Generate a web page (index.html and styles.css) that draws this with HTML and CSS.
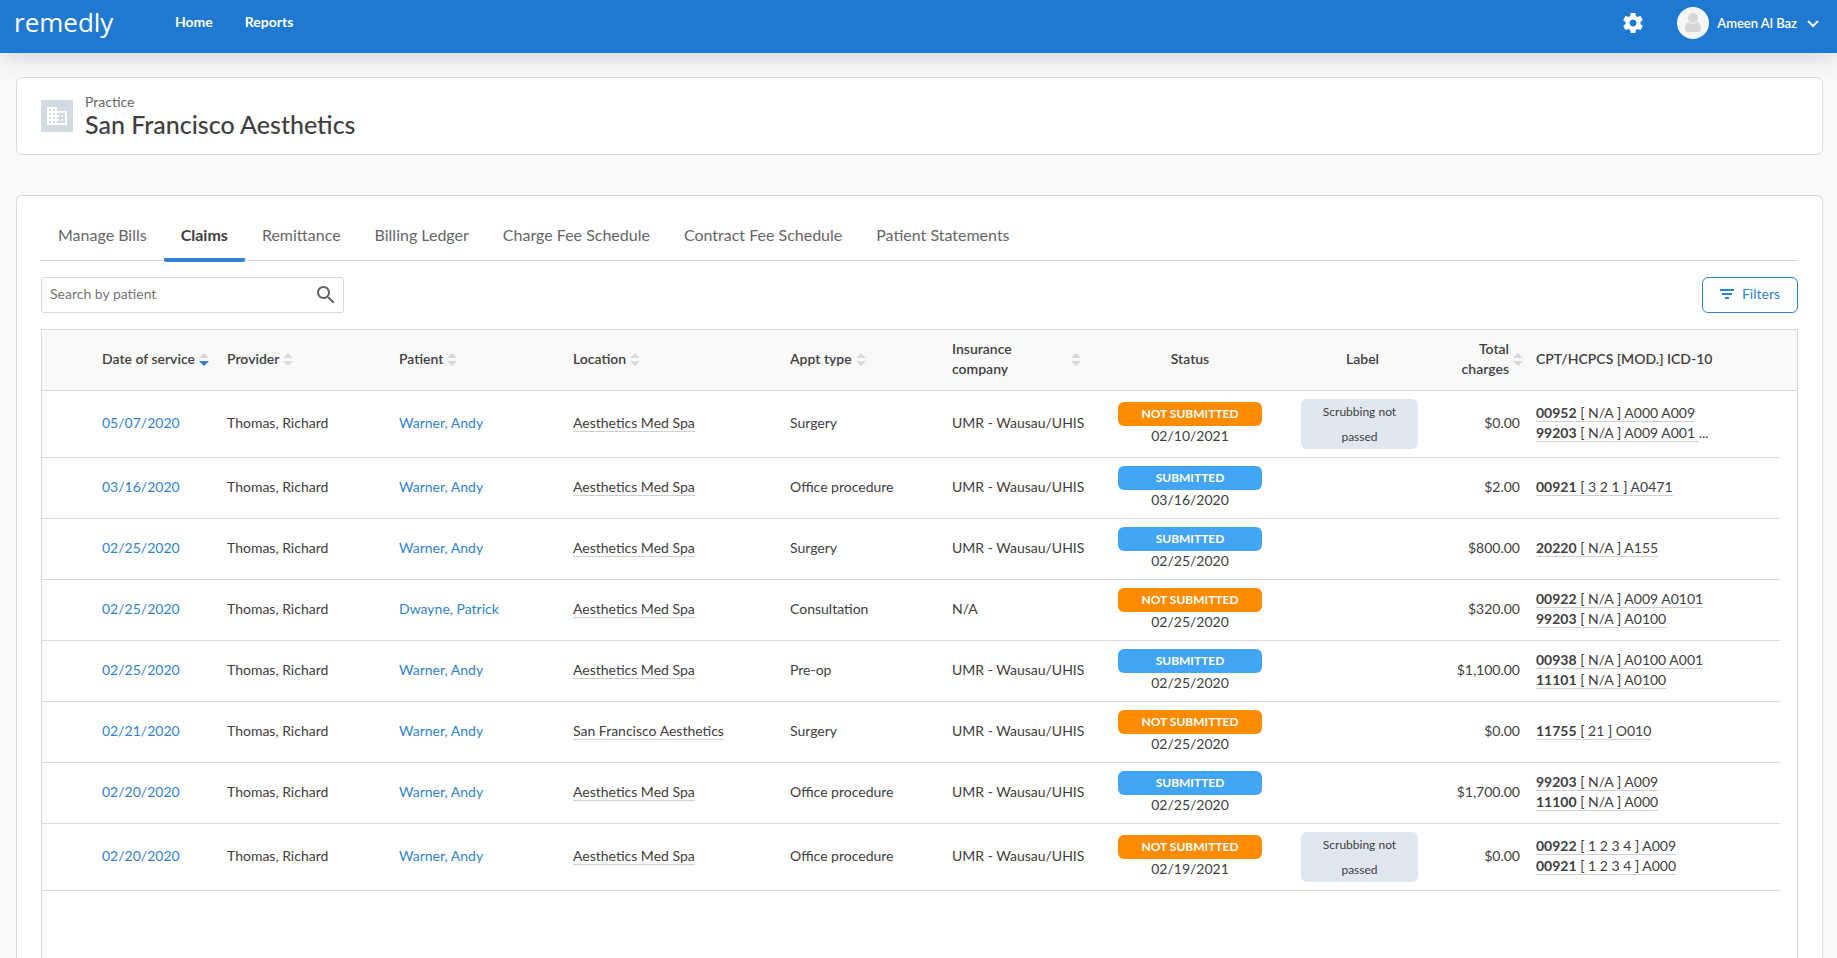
FILE: index.html
```html
<!DOCTYPE html>
<html lang="en">
<head>
    <meta charset="utf-8">
    <title>Remedly - Claims</title>
    <link rel="stylesheet" href="styles.css">
</head>
<body>
    <svg class="sprite" aria-hidden="true">
        <symbol id="sort" viewBox="0 0 10 13">
            <path class="sort-up" d="M5 0l5 5H0z"/>
            <path class="sort-down" d="M5 13l5-5H0z"/>
        </symbol>
    </svg>

    <header class="top-bar">
        <a class="logo" href="#">remedly</a>
        <nav class="main-nav">
            <a href="#">Home</a>
            <a href="#">Reports</a>
        </nav>
        <button class="icon-button" aria-label="Settings">
            <svg width="24" height="24" viewBox="0 0 24 24" fill="#fff"><path d="M19.43 12.98c.04-.32.07-.64.07-.98s-.03-.66-.07-.98l2.11-1.65c.19-.15.24-.42.12-.64l-2-3.46c-.12-.22-.39-.3-.61-.22l-2.49 1c-.52-.4-1.08-.73-1.69-.98l-.38-2.65C14.46 2.18 14.25 2 14 2h-4c-.25 0-.46.18-.49.42l-.38 2.65c-.61.25-1.17.59-1.69.98l-2.49-1c-.23-.09-.49 0-.61.22l-2 3.46c-.13.22-.07.49.12.64l2.11 1.65c-.04.32-.07.65-.07.98s.03.66.07.98l-2.11 1.65c-.19.15-.24.42-.12.64l2 3.46c.12.22.39.3.61.22l2.49-1c.52.4 1.08.73 1.69.98l.38 2.65c.03.24.24.42.49.42h4c.25 0 .46-.18.49-.42l.38-2.65c.61-.25 1.17-.59 1.69-.98l2.49 1c.23.09.49 0 .61-.22l2-3.46c.12-.22.07-.49-.12-.64l-2.11-1.65zM12 15.5c-1.93 0-3.5-1.57-3.5-3.5s1.57-3.5 3.5-3.5 3.5 1.57 3.5 3.5-1.57 3.5-3.5 3.5z"/></svg>
        </button>
        <button class="user-menu">
            <svg width="32" height="32" viewBox="0 0 32 32"><circle cx="16" cy="16" r="16" fill="#f5f7f6"/><circle cx="16" cy="11" r="5" fill="#d6d6d6"/><path d="M8 21c0-4 2-6 4-6 1 1 2 2 4 2s3-1 4-2c2 0 4 2 4 6v1c0 2-1 3-3 3H11c-2 0-3-1-3-3z" fill="#d6d6d6"/></svg>
            <span>Ameen Al Baz</span>
            <svg class="chevron" width="12" height="8" viewBox="0 0 12 8"><path d="M1 1l5 5 5-5" fill="none" stroke="#fff" stroke-width="2"/></svg>
        </button>
    </header>

    <main class="page">
        <section class="card practice">
            <svg width="32" height="32" viewBox="0 0 32 32"><path fill="#d2dae4" d="M0 0h32v32H0z"/><path fill="#fff" transform="translate(4 4)" d="M12 7V3H2v18h20V7H12zM6 19H4v-2h2v2zm0-4H4v-2h2v2zm0-4H4V9h2v2zm0-4H4V5h2v2zm4 12H8v-2h2v2zm0-4H8v-2h2v2zm0-4H8V9h2v2zm0-4H8V5h2v2zm10 12h-8v-2h2v-2h-2v-2h2v-2h-2V9h8v10zm-2-8h-2v2h2v-2zm0 4h-2v2h2v-2z"/></svg>
            <div>
                <p class="practice-label">Practice</p>
                <h1>San Francisco Aesthetics</h1>
            </div>
        </section>

        <section class="card claims">
            <nav class="tabs">
                <a href="#">Manage Bills</a>
                <a href="#" class="active">Claims</a>
                <a href="#">Remittance</a>
                <a href="#">Billing Ledger</a>
                <a href="#">Charge Fee Schedule</a>
                <a href="#">Contract Fee Schedule</a>
                <a href="#">Patient Statements</a>
            </nav>

            <div class="toolbar">
                <div class="search">
                    <input type="text" placeholder="Search by patient" aria-label="Search by patient">
                    <button aria-label="Search">
                        <svg width="24" height="24" viewBox="0 0 24 24" fill="#666"><path d="M15.5 14h-.79l-.28-.27C15.41 12.59 16 11.11 16 9.5 16 5.91 13.09 3 9.5 3S3 5.91 3 9.5 5.91 16 9.5 16c1.61 0 3.09-.59 4.23-1.57l.27.28v.79l5 4.99L20.49 19l-4.99-5zm-6 0C7.01 14 5 11.99 5 9.5S7.01 5 9.5 5 14 7.01 14 9.5 11.99 14 9.5 14z"/></svg>
                    </button>
                </div>
                <button class="filters">
                    <svg width="14" height="10" viewBox="0 0 14 10" fill="#3182ce"><path d="M0 0h14v2H0zM2 4h10v2H2zM5 8h4v2H5z"/></svg>
                    Filters
                </button>
            </div>

            <div class="table-container">
                <table>
                    <colgroup>
                        <col class="col-expand">
                        <col class="col-date">
                        <col class="col-provider">
                        <col class="col-patient">
                        <col class="col-location">
                        <col class="col-appt">
                        <col class="col-insurance">
                        <col class="col-status">
                        <col class="col-label">
                        <col class="col-total">
                        <col>
                        <col class="col-end">
                    </colgroup>
                    <thead>
                        <tr>
                            <th></th>
                            <th><div class="head">Date of service <svg class="sort desc"><use href="#sort"/></svg></div></th>
                            <th><div class="head">Provider <svg class="sort"><use href="#sort"/></svg></div></th>
                            <th><div class="head">Patient <svg class="sort"><use href="#sort"/></svg></div></th>
                            <th><div class="head">Location <svg class="sort"><use href="#sort"/></svg></div></th>
                            <th><div class="head">Appt type <svg class="sort"><use href="#sort"/></svg></div></th>
                            <th><div class="head spread">Insurance<br>company <svg class="sort"><use href="#sort"/></svg></div></th>
                            <th class="center">Status</th>
                            <th class="center">Label</th>
                            <th class="total"><div class="head">Total<br>charges <svg class="sort"><use href="#sort"/></svg></div></th>
                            <th colspan="2">CPT/HCPCS [MOD.] ICD-10</th>
                        </tr>
                    </thead>
                    <tbody>
                        <tr>
                            <td></td>
                            <td><a href="#">05/07/2020</a></td>
                            <td>Thomas, Richard</td>
                            <td><a href="#">Warner, Andy</a></td>
                            <td><span class="hint">Aesthetics Med Spa</span></td>
                            <td>Surgery</td>
                            <td>UMR - Wausau/UHIS</td>
                            <td class="center"><span class="status not-submitted">NOT SUBMITTED</span>02/10/2021</td>
                            <td class="label"><span>Scrubbing not passed</span></td>
                            <td class="total">$0.00</td>
                            <td><span class="hint"><b>00952</b> [ N/A ] A000 A009</span><br><span class="hint"><b>99203</b> [ N/A ] A009 A001 </span>...</td>
                            <td class="end"></td>
                        </tr>
                        <tr>
                            <td></td>
                            <td><a href="#">03/16/2020</a></td>
                            <td>Thomas, Richard</td>
                            <td><a href="#">Warner, Andy</a></td>
                            <td><span class="hint">Aesthetics Med Spa</span></td>
                            <td>Office procedure</td>
                            <td>UMR - Wausau/UHIS</td>
                            <td class="center"><span class="status submitted">SUBMITTED</span>03/16/2020</td>
                            <td></td>
                            <td class="total">$2.00</td>
                            <td><span class="hint"><b>00921</b> [ 3 2 1 ] A0471</span></td>
                            <td class="end"></td>
                        </tr>
                        <tr>
                            <td></td>
                            <td><a href="#">02/25/2020</a></td>
                            <td>Thomas, Richard</td>
                            <td><a href="#">Warner, Andy</a></td>
                            <td><span class="hint">Aesthetics Med Spa</span></td>
                            <td>Surgery</td>
                            <td>UMR - Wausau/UHIS</td>
                            <td class="center"><span class="status submitted">SUBMITTED</span>02/25/2020</td>
                            <td></td>
                            <td class="total">$800.00</td>
                            <td><span class="hint"><b>20220</b> [ N/A ] A155</span></td>
                            <td class="end"></td>
                        </tr>
                        <tr>
                            <td></td>
                            <td><a href="#">02/25/2020</a></td>
                            <td>Thomas, Richard</td>
                            <td><a href="#">Dwayne, Patrick</a></td>
                            <td><span class="hint">Aesthetics Med Spa</span></td>
                            <td>Consultation</td>
                            <td>N/A</td>
                            <td class="center"><span class="status not-submitted">NOT SUBMITTED</span>02/25/2020</td>
                            <td></td>
                            <td class="total">$320.00</td>
                            <td><span class="hint"><b>00922</b> [ N/A ] A009 A0101</span><br><span class="hint"><b>99203</b> [ N/A ] A0100</span></td>
                            <td class="end"></td>
                        </tr>
                        <tr>
                            <td></td>
                            <td><a href="#">02/25/2020</a></td>
                            <td>Thomas, Richard</td>
                            <td><a href="#">Warner, Andy</a></td>
                            <td><span class="hint">Aesthetics Med Spa</span></td>
                            <td>Pre-op</td>
                            <td>UMR - Wausau/UHIS</td>
                            <td class="center"><span class="status submitted">SUBMITTED</span>02/25/2020</td>
                            <td></td>
                            <td class="total">$1,100.00</td>
                            <td><span class="hint"><b>00938</b> [ N/A ] A0100 A001</span><br><span class="hint"><b>11101</b> [ N/A ] A0100</span></td>
                            <td class="end"></td>
                        </tr>
                        <tr>
                            <td></td>
                            <td><a href="#">02/21/2020</a></td>
                            <td>Thomas, Richard</td>
                            <td><a href="#">Warner, Andy</a></td>
                            <td><span class="hint">San Francisco Aesthetics</span></td>
                            <td>Surgery</td>
                            <td>UMR - Wausau/UHIS</td>
                            <td class="center"><span class="status not-submitted">NOT SUBMITTED</span>02/25/2020</td>
                            <td></td>
                            <td class="total">$0.00</td>
                            <td><span class="hint"><b>11755</b> [ 21 ] O010</span></td>
                            <td class="end"></td>
                        </tr>
                        <tr>
                            <td></td>
                            <td><a href="#">02/20/2020</a></td>
                            <td>Thomas, Richard</td>
                            <td><a href="#">Warner, Andy</a></td>
                            <td><span class="hint">Aesthetics Med Spa</span></td>
                            <td>Office procedure</td>
                            <td>UMR - Wausau/UHIS</td>
                            <td class="center"><span class="status submitted">SUBMITTED</span>02/25/2020</td>
                            <td></td>
                            <td class="total">$1,700.00</td>
                            <td><span class="hint"><b>99203</b> [ N/A ] A009</span><br><span class="hint"><b>11100</b> [ N/A ] A000</span></td>
                            <td class="end"></td>
                        </tr>
                        <tr>
                            <td></td>
                            <td><a href="#">02/20/2020</a></td>
                            <td>Thomas, Richard</td>
                            <td><a href="#">Warner, Andy</a></td>
                            <td><span class="hint">Aesthetics Med Spa</span></td>
                            <td>Office procedure</td>
                            <td>UMR - Wausau/UHIS</td>
                            <td class="center"><span class="status not-submitted">NOT SUBMITTED</span>02/19/2021</td>
                            <td class="label"><span>Scrubbing not passed</span></td>
                            <td class="total">$0.00</td>
                            <td><span class="hint"><b>00922</b> [ 1 2 3 4 ] A009</span><br><span class="hint"><b>00921</b> [ 1 2 3 4 ] A000</span></td>
                            <td class="end"></td>
                        </tr>
                    </tbody>
                </table>
            </div>
        </section>
    </main>
</body>
</html>
```
FILE: styles.css
```css
* {
    box-sizing: border-box;
}
body {
    margin: 0;
    height: 100vh;
    display: flex;
    flex-direction: column;
    overflow: hidden;
    background-color: #f9f9f9;
    color: #404040;
    font-family: Lato, sans-serif;
    font-size: 14px;
    line-height: 20px;
}
a {
    color: #3182ce;
    text-decoration: none;
}
button {
    font: inherit;
    background: none;
    border: none;
    padding: 0;
    cursor: pointer;
}
svg {
    display: block;
    flex: none;
}
.sprite {
    position: absolute;
    width: 0;
    height: 0;
}

/* top bar */
.top-bar {
    display: flex;
    align-items: center;
    flex: none;
    height: 53px;
    padding: 0 18px 8px 14px;
    background-color: #2079d1;
    box-shadow: 0 4px 24px rgba(45, 55, 90, 0.2);
}
.top-bar a {
    color: white;
}
.logo {
    width: 161px;
    padding-bottom: 2px;
    font-family: "Open Sans", sans-serif;
    font-size: 26px;
    line-height: 32px;
}
.main-nav {
    display: flex;
    gap: 32px;
    flex: 1;
    padding-bottom: 2px;
    font-weight: bold;
}
.icon-button {
    margin-right: 32px;
}
.user-menu {
    display: flex;
    align-items: center;
    gap: 8px;
    color: white;
    font-size: 13px;
    font-weight: 600;
}
.chevron {
    margin: 3px 0 0 2px;
}

/* cards */
.page {
    display: flex;
    flex-direction: column;
    flex: 1;
    gap: 40px;
    min-height: 0;
    padding: 24px 14px 0 16px;
}
.card {
    background-color: white;
    border: 1px solid #d9d9d9;
    border-radius: 6px;
}
.practice {
    display: flex;
    align-items: center;
    gap: 12px;
    height: 78px;
    padding: 0 24px;
}
.practice-label {
    margin: 0;
    color: #666;
}
.practice h1 {
    margin: 0;
    padding-bottom: 4px;
    font-size: 25px;
    font-weight: 500;
    line-height: 25px;
}
.claims {
    display: flex;
    flex-direction: column;
    flex: 1;
    min-height: 0;
    padding: 16px 24px 0;
    border-bottom: none;
    border-radius: 6px 6px 0 0;
}

/* tabs */
.tabs {
    display: flex;
    flex: none;
    height: 49px;
    border-bottom: 1px solid #d9d9d9;
    font-size: 16px;
    line-height: 46px;
}
.tabs a {
    height: 50px;
    padding: 0 17px;
    color: #666;
}
.tabs .active {
    color: #404040;
    font-weight: bold;
    background: linear-gradient(#3182ce, #3182ce) bottom / 100% 4px no-repeat;
    border-radius: 2px;
}

/* search and filters */
.toolbar {
    display: flex;
    justify-content: space-between;
    flex: none;
    padding: 16px 0;
}
.search {
    display: flex;
    align-items: center;
    width: 303px;
    height: 36px;
    padding: 0 5px 0 8px;
    border: 1px solid #d9d9d9;
    border-radius: 3px;
}
.search input {
    flex: 1;
    min-width: 0;
    padding: 0 0 2px;
    border: none;
    outline: none;
    font: inherit;
}
.search input::placeholder {
    color: #757575;
}
.filters {
    display: flex;
    align-items: center;
    justify-content: center;
    gap: 8px;
    width: 96px;
    height: 36px;
    padding-bottom: 2px;
    border: 1px solid #3182ce;
    border-radius: 6px;
    color: #3182ce;
}

/* claims table */
.table-container {
    flex: 1;
    min-height: 0;
    border: 1px solid #d9d9d9;
    border-bottom: none;
}
table {
    width: 100%;
    table-layout: fixed;
    border-collapse: separate;
    border-spacing: 0;
}
.col-expand { width: 52px; }
.col-date { width: 125px; }
.col-provider { width: 172px; }
.col-patient { width: 174px; }
.col-location { width: 217px; }
.col-appt { width: 162px; }
.col-insurance { width: 145px; }
.col-status { width: 202px; }
.col-label { width: 143px; }
.col-total { width: 94px; }
.col-end { width: 17px; }
th, td {
    padding: 7px 8px 9px;
    border-bottom: 1px solid #d9d9d9;
    text-align: left;
    white-space: nowrap;
}
th {
    height: 61px;
    background-color: #f9f9f9;
    font-weight: 600;
}
.head {
    display: flex;
    align-items: center;
    gap: 4px;
}
.spread {
    justify-content: space-between;
}
.sort {
    width: 10px;
    height: 13px;
    fill: #d9d9d9;
    color: #d9d9d9;
}
.sort-down {
    fill: currentColor;
}
.desc {
    color: #3182ce;
}
td.end {
    padding: 0;
    border-bottom: none;
}
.center {
    text-align: center;
}
.total {
    text-align: right;
}
th.total {
    padding-right: 5px;
}
.total .head {
    justify-content: flex-end;
}
.status {
    display: block;
    width: 144px;
    margin: 0 auto;
    border-radius: 6px;
    color: white;
    font-size: 12px;
    font-weight: bold;
    line-height: 24px;
}
.not-submitted {
    background-color: #ff8c00;
}
.submitted {
    background-color: #42a5f5;
}
td.center {
    padding: 8px;
}
td.label {
    padding: 8px 16px 8px 10px;
    text-align: center;
}
.label span {
    display: block;
    padding: 0 20px;
    border-radius: 6px;
    background-color: #e0e7ef;
    font-size: 12px;
    line-height: 25px;
    white-space: normal;
}
.hint {
    border-bottom: 1px solid #d0d0d0;
}
```
